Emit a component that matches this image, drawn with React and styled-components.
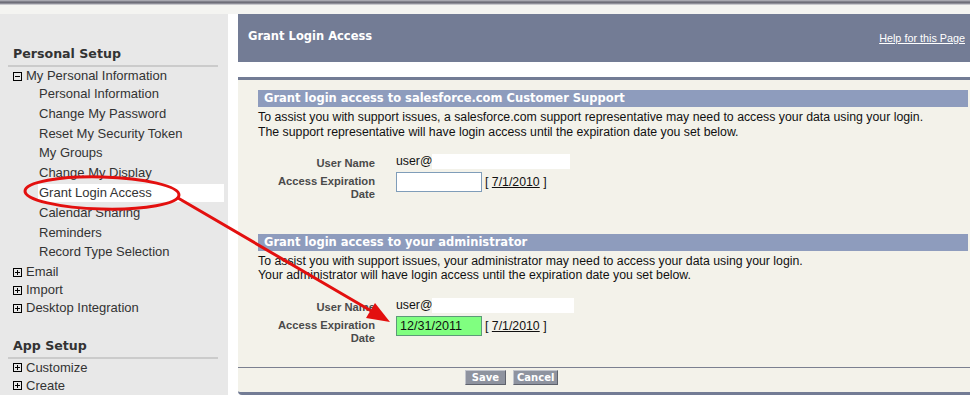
import React from 'react';
import styled, { createGlobalStyle } from 'styled-components';

const GlobalStyle = createGlobalStyle`
  html, body { margin: 0; padding: 0; background: #fff; }
  body { font-family: "Liberation Sans", Arial, sans-serif; }
  #root { width: 970px; height: 395px; overflow: hidden; }
`;

const Page = styled.div`
  position: relative;
  width: 970px;
  height: 395px;
  display: flex;
  flex-direction: column;
  background: #fff;
  overflow: hidden;
`;

const TopBar = styled.div`
  height: 5px;
  flex-shrink: 0;
  background: linear-gradient(to bottom, #c4c4ca 0, #8c8c96 1px, #6e6e78 2.5px, #8e8e98 3.5px, #c8c8cc 4.5px, #e6e6e6 5px);
`;

const TopStrip = styled.div`
  height: 9px;
  flex-shrink: 0;
  background: #f4f4f1;
`;

const Main = styled.div`
  flex: 1;
  display: flex;
  min-height: 0;
`;

const Sidebar = styled.nav`
  width: 228px;
  flex-shrink: 0;
  box-sizing: border-box;
  padding-top: 32px;
  background: #e8e8e8;
`;

const SideHeading = styled.h2`
  margin: ${p => (p.$spaced ? '20.5px' : '0')} 0 0;
  padding-left: 13px;
  font: bold 12.6px/16px "DejaVu Sans", Verdana, sans-serif;
  color: #333;
`;

const SideRule = styled.div`
  height: 2px;
  margin: 3px 10px 0 8px;
  background: #cbcbcb;
`;

const NodeRow = styled.div`
  display: flex;
  align-items: center;
  height: 18px;
  padding-left: 13px;
  font-size: 13px;
  line-height: 18px;
  color: #333;
`;

const ToggleIcon = styled.svg`
  width: 9px;
  height: 9px;
  margin-right: 4px;
  flex-shrink: 0;
`;

const SubItem = styled.div`
  height: 17.8px;
  margin: 0 4px 2px 38px;
  padding-left: 1px;
  font-size: 13px;
  line-height: 17.8px;
  color: #333;
  background: ${p => (p.$active ? '#fff' : 'transparent')};
`;

const Content = styled.div`
  flex: 1;
  min-width: 0;
  margin-left: 10px;
  display: flex;
  flex-direction: column;
`;

const Header = styled.div`
  height: 48px;
  flex-shrink: 0;
  box-sizing: border-box;
  padding: 15px 5px 0 10px;
  display: flex;
  justify-content: space-between;
  align-items: flex-start;
  background: #737c95;
`;

const Title = styled.h1`
  margin: 0;
  font: bold 11.5px/14px "DejaVu Sans", Verdana, sans-serif;
  color: #fff;
`;

const HelpLink = styled.a`
  margin-top: 2px;
  font-size: 10.8px;
  line-height: 14px;
  color: #fff;
  text-decoration: underline;
`;

const Panel = styled.div`
  flex: 1;
  margin-top: 15px;
  display: flex;
  flex-direction: column;
  background: #f3f2ea;
  border-top: 3px solid #737c95;
  border-bottom: 3px solid #737c95;
  border-bottom-left-radius: 4px;
`;

const PanelBody = styled.div`
  padding: 10px 2px 0 20px;
`;

const Section = styled.section`
  & + & {
    margin-top: 32.4px;
  }
`;

const SectionHeader = styled.h3`
  margin: 0;
  height: 17px;
  padding-left: 6px;
  background: #8e9cbd;
  font: bold 11.5px/17px "DejaVu Sans", Verdana, sans-serif;
  color: #fff;
`;

const Desc = styled.p`
  margin: 3px 0 0;
  font-size: 12.3px;
  line-height: 14.5px;
  color: #111;
`;

const FormGrid = styled.div`
  margin-top: 15px;
  display: grid;
  grid-template-columns: 117px 1fr;
  grid-template-rows: 15px auto;
  column-gap: 21px;
  row-gap: 3px;
`;

const Label = styled.div`
  padding-top: 3px;
  text-align: right;
  font: bold 11.2px/13.3px "Liberation Sans", Arial, sans-serif;
  color: #4a4a4a;
`;

const Value = styled.div`
  height: 15px;
  display: flex;
  align-items: center;
  font-size: 12.3px;
  line-height: 15px;
  color: #111;
`;

const Mask = styled.span`
  width: ${p => p.$w}px;
  height: 15px;
  background: #fff;
`;

const DateCell = styled.div`
  height: 20px;
  display: flex;
  align-items: center;
`;

const DateInput = styled.input`
  width: 86px;
  height: 20px;
  box-sizing: border-box;
  margin: 0;
  padding: 0 3px;
  border: 1px solid ${p => (p.$filled ? '#5c9a78' : '#7f9db9')};
  background: ${p => (p.$filled ? '#80ff80' : '#fff')};
  font: 12.6px "Liberation Sans", Arial, sans-serif;
  color: #111;
  outline: none;
`;

const DateHint = styled.span`
  margin-left: 3px;
  font-size: 12.3px;
  color: #111;
  white-space: pre;

  a {
    color: #111;
    text-decoration: underline;
  }
`;

const ButtonBar = styled.div`
  margin-top: auto;
  border-top: 1px solid #7b8090;
  padding: 2px 0 7px 227px;
  display: flex;
  gap: 7px;
`;

const Button = styled.button`
  min-width: 41px;
  height: 15px;
  box-sizing: border-box;
  margin: 0;
  padding: 0 3px;
  border: 1px solid;
  border-color: #c2c5cc #5e626c #5e626c #c2c5cc;
  background: #8e939f;
  font: bold 10px/13px "DejaVu Sans", Verdana, sans-serif;
  color: #fff;
  text-align: center;
`;

const Annotation = styled.svg`
  position: absolute;
  top: 0;
  left: 0;
  width: 970px;
  height: 395px;
  pointer-events: none;
`;

function Toggle({ open }) {
  return (
    <ToggleIcon viewBox="0 0 9 9">
      <rect x="0.5" y="0.5" width="8" height="8" fill="none" stroke="#000" strokeWidth="1" />
      <line x1="2" y1="4.5" x2="7" y2="4.5" stroke="#000" strokeWidth="1" />
      {!open && <line x1="4.5" y1="2" x2="4.5" y2="7" stroke="#000" strokeWidth="1" />}
    </ToggleIcon>
  );
}

const subItems = [
  'Personal Information',
  'Change My Password',
  'Reset My Security Token',
  'My Groups',
  'Change My Display',
  'Grant Login Access',
  'Calendar Sharing',
  'Reminders',
  'Record Type Selection',
];

function AccessSection({ title, lines, maskWidth, dateValue }) {
  return (
    <Section>
      <SectionHeader>{title}</SectionHeader>
      <Desc>
        {lines[0]}
        <br />
        {lines[1]}
      </Desc>
      <FormGrid>
        <Label>User Name</Label>
        <Value>
          user@
          <Mask $w={maskWidth} />
        </Value>
        <Label>Access Expiration Date</Label>
        <DateCell>
          <DateInput readOnly value={dateValue} $filled={!!dateValue} />
          <DateHint>
            {'[ '}
            <a href="#">7/1/2010</a>
            {' ]'}
          </DateHint>
        </DateCell>
      </FormGrid>
    </Section>
  );
}

export default function App() {
  return (
    <Page>
      <GlobalStyle />
      <TopBar />
      <TopStrip />
      <Main>
        <Sidebar>
          <SideHeading>Personal Setup</SideHeading>
          <SideRule />
          <NodeRow>
            <Toggle open />
            My Personal Information
          </NodeRow>
          {subItems.map(s => (
            <SubItem key={s} $active={s === 'Grant Login Access'}>
              {s}
            </SubItem>
          ))}
          <NodeRow>
            <Toggle />
            Email
          </NodeRow>
          <NodeRow>
            <Toggle />
            Import
          </NodeRow>
          <NodeRow>
            <Toggle />
            Desktop Integration
          </NodeRow>
          <SideHeading $spaced>App Setup</SideHeading>
          <SideRule />
          <NodeRow>
            <Toggle />
            Customize
          </NodeRow>
          <NodeRow>
            <Toggle />
            Create
          </NodeRow>
        </Sidebar>
        <Content>
          <Header>
            <Title>Grant Login Access</Title>
            <HelpLink href="#">Help for this Page</HelpLink>
          </Header>
          <Panel>
            <PanelBody>
              <AccessSection
                title="Grant login access to salesforce.com Customer Support"
                lines={[
                  'To assist you with support issues, a salesforce.com support representative may need to access your data using your login.',
                  'The support representative will have login access until the expiration date you set below.',
                ]}
                maskWidth={138}
                dateValue=""
              />
              <AccessSection
                title="Grant login access to your administrator"
                lines={[
                  'To assist you with support issues, your administrator may need to access your data using your login.',
                  'Your administrator will have login access until the expiration date you set below.',
                ]}
                maskWidth={142}
                dateValue="12/31/2011"
              />
            </PanelBody>
            <ButtonBar>
              <Button>Save</Button>
              <Button>Cancel</Button>
            </ButtonBar>
          </Panel>
        </Content>
      </Main>
      <Annotation viewBox="0 0 970 395">
        <ellipse cx="102" cy="193" rx="77" ry="16" fill="none" stroke="#e3100f" strokeWidth="3" transform="rotate(1.5 102 193)" />
        <line x1="178" y1="198" x2="373" y2="312" stroke="#e3100f" strokeWidth="3" strokeLinecap="round" />
        <polygon points="390,322 366,318 375,303" fill="#e3100f" />
      </Annotation>
    </Page>
  );
}
